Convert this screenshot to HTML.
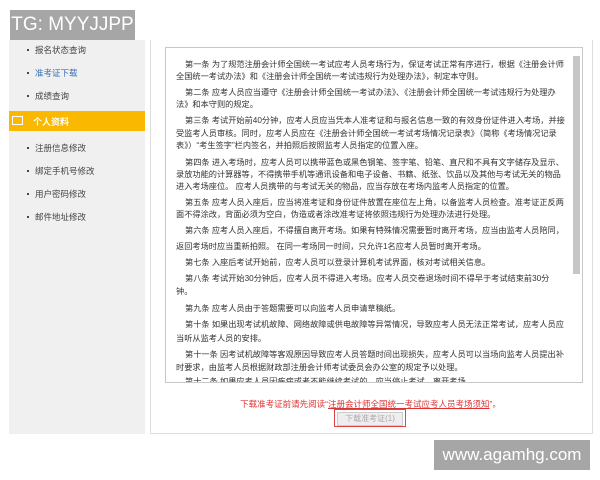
<!DOCTYPE html>
<html><head><meta charset="utf-8"><style>
body{margin:0;width:600px;height:480px;background:#fff;position:relative;overflow:hidden;font-family:"Liberation Sans","Noto Sans CJK SC",sans-serif;}
.abs{position:absolute}
#side{left:9px;top:40px;width:136px;height:394px;background:#f0f0f0}
.it{position:absolute;left:26px;font-size:8.5px;color:#444;white-space:nowrap}
.it:before{content:"";position:absolute;left:-8px;top:5px;width:2px;height:2px;background:#444}
#bar{left:9px;top:111px;width:136px;height:20px;background:#fbb800}
#outer{left:150px;top:40px;width:441px;height:393px;border:1px solid #ddd;border-top:none;border-left:1px solid #ddd}
#inner{left:165px;top:47px;width:416px;height:334px;border:1px solid #c8c8c8;overflow:hidden}
.l{position:absolute;left:10px;font-size:8.2px;color:#333;white-space:nowrap;line-height:10px}
.i{left:19px}
#sb{left:573px;top:56px;width:7px;height:218px;background:#c6c6c6}
</style></head><body>
<div class="abs" style="left:10px;top:10px;width:125px;height:30px;background:#a6a6a6;color:#fff;font-size:19px;line-height:30px;text-align:center">TG: MYYJJPP</div>
<div class="abs" id="side">
<div class="it" style="top:4px">报名状态查询</div>
<div class="it" style="top:27px;color:#3a6fb5">准考证下载</div>
<div class="it" style="top:50px">成绩查询</div>
<div class="it" style="top:102px">注册信息修改</div>
<div class="it" style="top:125px">绑定手机号修改</div>
<div class="it" style="top:148px">用户密码修改</div>
<div class="it" style="top:171px">邮件地址修改</div>
</div>
<div class="abs" id="bar"><div style="position:absolute;left:3px;top:5px;width:9px;height:7px;border:1px solid #fff"></div><div style="position:absolute;left:24px;top:4px;color:#fff;font-size:9px;font-weight:bold">个人资料</div></div>
<div class="abs" id="outer"></div>
<div class="abs" id="inner">
<div class="l i" style="top:12px">第一条 为了规范注册会计师全国统一考试应考人员考场行为，保证考试正常有序进行，根据《注册会计师</div>
<div class="l" style="top:24px">全国统一考试办法》和《注册会计师全国统一考试违规行为处理办法》，制定本守则。</div>
<div class="l i" style="top:40px">第二条 应考人员应当遵守《注册会计师全国统一考试办法》、《注册会计师全国统一考试违规行为处理办</div>
<div class="l" style="top:52px">法》和本守则的规定。</div>
<div class="l i" style="top:68px">第三条 考试开始前40分钟，应考人员应当凭本人准考证和与报名信息一致的有效身份证件进入考场，并接</div>
<div class="l" style="top:81px">受监考人员审核。同时，应考人员应在《注册会计师全国统一考试考场情况记录表》（简称《考场情况记录</div>
<div class="l" style="top:93px">表》）“考生签字”栏内签名，并拍照后按照监考人员指定的位置入座。</div>
<div class="l i" style="top:110px">第四条 进入考场时，应考人员可以携带蓝色或黑色钢笔、签字笔、铅笔、直尺和不具有文字储存及显示、</div>
<div class="l" style="top:122px">录放功能的计算器等，不得携带手机等通讯设备和电子设备、书籍、纸张、饮品以及其他与考试无关的物品</div>
<div class="l" style="top:134px">进入考场座位。 应考人员携带的与考试无关的物品，应当存放在考场内监考人员指定的位置。</div>
<div class="l i" style="top:150px">第五条 应考人员入座后，应当将准考证和身份证件放置在座位左上角，以备监考人员检查。准考证正反两</div>
<div class="l" style="top:162px">面不得涂改，背面必须为空白，伪造或者涂改准考证将依照违规行为处理办法进行处理。</div>
<div class="l i" style="top:178px">第六条 应考人员入座后，不得擅自离开考场。如果有特殊情况需要暂时离开考场，应当由监考人员陪同，</div>
<div class="l" style="top:194px">返回考场时应当重新拍照。 在同一考场同一时间，只允许1名应考人员暂时离开考场。</div>
<div class="l i" style="top:210px">第七条 入座后考试开始前，应考人员可以登录计算机考试界面，核对考试相关信息。</div>
<div class="l i" style="top:226px">第八条 考试开始30分钟后，应考人员不得进入考场。应考人员交卷退场时间不得早于考试结束前30分</div>
<div class="l" style="top:239px">钟。</div>
<div class="l i" style="top:256px">第九条 应考人员由于答题需要可以向监考人员申请草稿纸。</div>
<div class="l i" style="top:272px">第十条 如果出现考试机故障、网络故障或供电故障等异常情况，导致应考人员无法正常考试，应考人员应</div>
<div class="l" style="top:286px">当听从监考人员的安排。</div>
<div class="l i" style="top:302px">第十一条 因考试机故障等客观原因导致应考人员答题时间出现损失，应考人员可以当场向监考人员提出补</div>
<div class="l" style="top:315px">时要求，由监考人员根据财政部注册会计师考试委员会办公室的规定予以处理。</div>
<div class="l i" style="top:329px">第十二条 如果应考人员因疾病或者不能继续考试的，应当停止考试，离开考场。</div>
</div>
<div class="abs" id="sb"></div>
<div class="abs" style="left:150px;width:441px;top:398px;text-align:center;font-size:8.5px;color:#d33">下载准考证前请先阅读“<span style="text-decoration:underline">注册会计师全国统一考试应考人员考场须知</span>”。</div>
<div class="abs" style="left:334px;top:409px;width:72px;height:18px;border:1px solid #d44;box-sizing:border-box;padding:2px"><div style="background:#eee;border:1px solid #ccc;height:12px;font-size:8px;color:#aaa;text-align:center;line-height:12px">下载准考证(1)</div></div>
<div class="abs" style="left:434px;top:440px;width:156px;height:30px;background:#a6a6a6;color:#fff;font-size:17px;line-height:30px;text-align:center">www.agamhg.com</div>
</body></html>
